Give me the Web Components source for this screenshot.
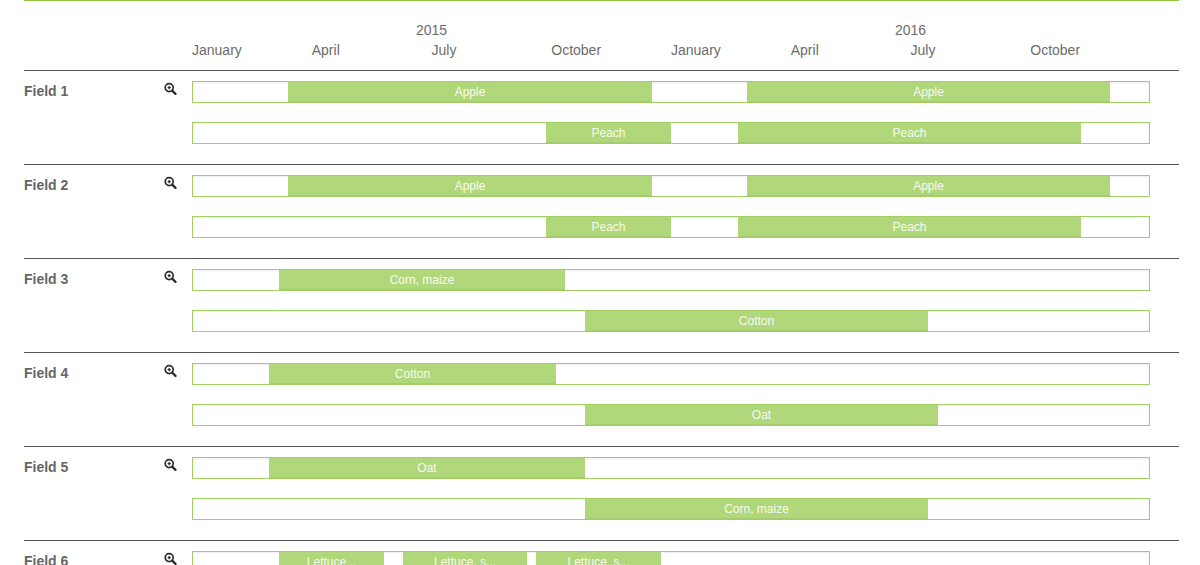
<!DOCTYPE html>
<html>
<head>
<meta charset="utf-8">
<title>Crop plan</title>
<style>
  html, body { margin: 0; height: 565px; overflow: hidden; background: #fff; }
  body { font-family: "Liberation Sans", Arial, sans-serif; color: #666; }
</style>
</head>
<body>
<crop-plan>
  <plan-header></plan-header>
  <field-row name="Field 1">
    <crop-bar><crop-seg from="95" to="459">Apple</crop-seg><crop-seg from="554" to="917">Apple</crop-seg></crop-bar>
    <crop-bar><crop-seg from="353" to="478">Peach</crop-seg><crop-seg from="545" to="888">Peach</crop-seg></crop-bar>
  </field-row>
  <field-row name="Field 2">
    <crop-bar><crop-seg from="95" to="459">Apple</crop-seg><crop-seg from="554" to="917">Apple</crop-seg></crop-bar>
    <crop-bar><crop-seg from="353" to="478">Peach</crop-seg><crop-seg from="545" to="888">Peach</crop-seg></crop-bar>
  </field-row>
  <field-row name="Field 3">
    <crop-bar><crop-seg from="86" to="372">Corn, maize</crop-seg></crop-bar>
    <crop-bar><crop-seg from="392" to="735">Cotton</crop-seg></crop-bar>
  </field-row>
  <field-row name="Field 4">
    <crop-bar><crop-seg from="76" to="363">Cotton</crop-seg></crop-bar>
    <crop-bar><crop-seg from="392" to="745">Oat</crop-seg></crop-bar>
  </field-row>
  <field-row name="Field 5">
    <crop-bar><crop-seg from="76" to="392">Oat</crop-seg></crop-bar>
    <crop-bar><crop-seg from="392" to="735">Corn, maize</crop-seg></crop-bar>
  </field-row>
  <field-row name="Field 6">
    <crop-bar><crop-seg from="86" to="191">Lettuce...</crop-seg><crop-seg from="210" to="334">Lettuce, s...</crop-seg><crop-seg from="343" to="468">Lettuce, s...</crop-seg></crop-bar>
  </field-row>
</crop-plan>

<script>
// Top level container, holds the green rule and the page gutters
class CropPlan extends HTMLElement {
  constructor() {
    super();
    this.attachShadow({ mode: 'open' }).innerHTML = `
      <style>
        :host { display: block; margin: 0 21px 0 24px; border-top: 1px solid #8cc63f; }
      </style>
      <slot></slot>
    `;
  }
}

// Years and months above the bars, eight quarters over two years
class PlanHeader extends HTMLElement {
  constructor() {
    super();
    const months = ['January', 'April', 'July', 'October'];
    const year = y => `
      <div class="year">
        <div class="label">${y}</div>
        <div class="months">${months.map(m => `<span>${m}</span>`).join('')}</div>
      </div>`;
    this.attachShadow({ mode: 'open' }).innerHTML = `
      <style>
        :host { display: block; height: 69px; box-sizing: border-box; padding: 21px 0 0 168px; font-size: 14px; color: #6c6c6c; }
        .years { display: flex; width: 958px; }
        .year { flex: 1; }
        .label { text-align: center; height: 20px; line-height: 16px; }
        .months { display: grid; grid-template-columns: repeat(4, 1fr); line-height: 16px; }
      </style>
      <div class="years">${year(2015)}${year(2016)}</div>
    `;
  }
}

// One field: name, zoom icon and its stack of bars
class FieldRow extends HTMLElement {
  constructor() {
    super();
    this.attachShadow({ mode: 'open' }).innerHTML = `
      <style>
        :host { display: grid; grid-template-columns: 140px 28px 958px; height: 94px; box-sizing: border-box; border-top: 1px solid #555; padding-top: 10px; }
        .name { font-size: 14px; font-weight: bold; color: #666; line-height: 20px; }
        svg { display: block; margin-top: 1px; }
        .bars { display: flex; flex-direction: column; gap: 19px; }
      </style>
      <div class="name"></div>
      <div>
        <svg width="13" height="13" viewBox="0 0 13 13" fill="none" stroke="#2b2b2b">
          <circle cx="5.2" cy="5.6" r="4" stroke-width="1.7"/>
          <path d="M8.2 8.6l3.3 3.3" stroke-width="2.2" stroke-linecap="round"/>
          <path d="M3.6 5.6h3.2M5.2 4v3.2" stroke-width="1.3"/>
        </svg>
      </div>
      <div class="bars"><slot></slot></div>
    `;
  }
  connectedCallback() {
    this.shadowRoot.querySelector('.name').textContent = this.getAttribute('name');
  }
}

// Outlined track, one grid column per pixel so segments can sit on the time scale
class CropBar extends HTMLElement {
  constructor() {
    super();
    this.attachShadow({ mode: 'open' }).innerHTML = `
      <style>
        :host { display: grid; grid-template-columns: repeat(956, 1fr); grid-template-rows: 20px; height: 22px; box-sizing: border-box; border: 1px solid #a0d062; background: #fff; box-shadow: inset 0 1px 2px rgba(0,0,0,.07); }
      </style>
      <slot></slot>
    `;
  }
}

class CropSeg extends HTMLElement {
  constructor() {
    super();
    this.attachShadow({ mode: 'open' }).innerHTML = `
      <style>
        :host { display: block; background: #b0d77a; color: #f8fbf2; font-size: 12px; line-height: 21px; text-align: center; white-space: nowrap; overflow: hidden; box-shadow: inset 0 -1px 0 #a3cc6c; }
      </style>
      <slot></slot>
    `;
  }
  connectedCallback() {
    this.style.gridColumn = `${+this.getAttribute('from') + 1} / ${+this.getAttribute('to') + 1}`;
  }
}

customElements.define('crop-plan', CropPlan);
customElements.define('plan-header', PlanHeader);
customElements.define('field-row', FieldRow);
customElements.define('crop-bar', CropBar);
customElements.define('crop-seg', CropSeg);
</script>
</body>
</html>
